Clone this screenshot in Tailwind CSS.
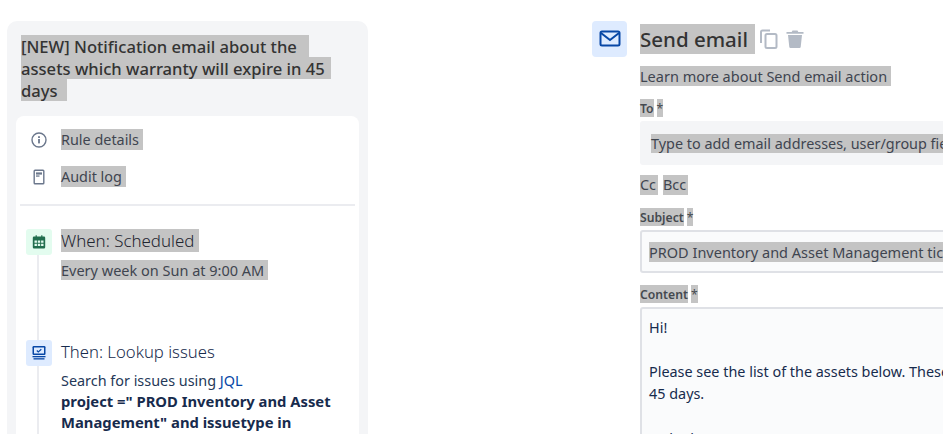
<!DOCTYPE html>
<html lang="en">
  <head>
    <meta charset="UTF-8" />
    <title>Send email rule</title>
    <script src="https://cdn.jsdelivr.net/npm/@tailwindcss/browser@4"></script>
  </head>
  <body class="h-[434px] w-[943px] overflow-hidden bg-white font-['Noto_Sans',sans-serif] text-[#172b4d]">
    <div class="flex items-start">
      <!-- Rule sidebar -->
      <aside class="ml-[7px] mt-[21px] h-[440px] w-[361px] shrink-0 rounded-t-[10px] bg-[#f4f5f7] px-[9px] pt-[14px]">
        <h1 class="px-[5px] text-[16.6px] font-medium leading-[24px] text-[#333]">
          <span class="block h-[22px] w-[288px] whitespace-nowrap bg-[#c4c4c4]">[NEW] Notification email about the</span>
          <span class="block h-[22px] w-[310px] whitespace-nowrap bg-[#c4c4c4]">assets which warranty will expire in 45</span>
          <span class="block h-[22px] w-[46px] whitespace-nowrap bg-[#c4c4c4]">days</span>
        </h1>
        <div class="mt-[15px] h-[400px] rounded-t-[8px] bg-white px-[4px]">
          <ul class="pl-[11px] pt-[13px]">
            <li class="flex h-[21px] items-center gap-[14px]">
              <svg class="h-[16px] w-[16px] shrink-0" viewBox="0 0 16 16" fill="none">
                <circle cx="8" cy="8" r="7" stroke="#6b778c" stroke-width="1.4" />
                <rect x="7.100" y="7" width="1.800" height="4.400" fill="#6b778c" />
                <rect x="7.100" y="4.200" width="1.800" height="1.800" fill="#6b778c" />
              </svg>
              <span class="bg-[#c4c4c4] text-[14.4px] leading-[21px] text-[#3f4550]">Rule details&nbsp;</span>
            </li>
            <li class="mt-[16px] flex h-[21px] items-center gap-[14px]">
              <svg class="h-[16px] w-[16px] shrink-0" viewBox="0 0 16 16" fill="none">
                <rect x="3.200" y="1.200" width="9.600" height="13.600" rx="0.800" stroke="#6b778c" stroke-width="1.400" />
                <rect x="5" y="3.400" width="6" height="2.200" fill="#6b778c" />
                <rect x="5" y="6.400" width="3.500" height="1.300" fill="#6b778c" />
              </svg>
              <span class="bg-[#c4c4c4] text-[14.4px] leading-[21px] text-[#3f4550]">Audit log&nbsp;</span>
            </li>
          </ul>
          <div class="mt-[17px] h-[2px] bg-[#ebecf0]"></div>
          <!-- Rule steps -->
          <div class="relative px-[6px] pt-[23px]">
            <div class="absolute left-[17px] top-[30px] h-[300px] w-[2px] bg-[#ebecf0]"></div>
            <section class="relative flex h-[111px] gap-[9px]">
              <div class="flex h-[26px] w-[26px] shrink-0 items-center justify-center rounded-[3px] bg-[#e3fcef]">
                <svg class="h-[16px] w-[16px]" viewBox="0 0 16 16">
                  <path d="M3 2.500h1.600V1.200h1.200v1.300h4.400V1.200h1.200v1.300H13a1.200 1.200 0 0 1 1.200 1.200v9.600a1.200 1.200 0 0 1-1.200 1.200H3a1.200 1.200 0 0 1-1.200-1.200V3.700A1.200 1.200 0 0 1 3 2.500z" fill="#216e4e" />
                  <path d="M3.500 6.500h2.400v2.300H3.500zM6.800 6.500h2.400v2.300H6.800zM10.100 6.500h2.400v2.300h-2.400zM3.500 9.800h2.400v2.300H3.500zM6.800 9.800h2.400v2.300H6.800zM10.100 9.800h2.400v2.300h-2.400z" fill="#e3fcef" />
                </svg>
              </div>
              <div>
                <h2 class="text-[16.9px] font-light leading-[23px] text-[#1f2530]"><span class="bg-[#c4c4c4]">When: Scheduled&nbsp;</span></h2>
                <p class="mt-[8px] text-[14.5px] leading-[21px] text-[#3f4550]"><span class="bg-[#c4c4c4]">Every week on Sun at 9:00 AM&nbsp;</span></p>
              </div>
            </section>
            <section class="relative flex gap-[9px]">
              <div class="flex h-[26px] w-[26px] shrink-0 items-center justify-center rounded-[3px] bg-[#deebff]">
                <svg class="h-[16px] w-[16px]" viewBox="0 0 16 16">
                  <rect x="1.500" y="1" width="13" height="9" rx="1.200" fill="#0747a6" />
                  <rect x="3" y="2.500" width="10" height="6" fill="#deebff" />
                  <path d="M5.800 5.500l1.500 1.400 3-2.600" fill="none" stroke="#0747a6" stroke-width="1.200" />
                  <rect x="1.500" y="11" width="13" height="1.300" fill="#0747a6" />
                  <rect x="2.500" y="13.200" width="11" height="1.300" fill="#0747a6" />
                </svg>
              </div>
              <div>
                <h2 class="text-[16.7px] font-light leading-[23px] text-[#172b4d]">Then: Lookup issues</h2>
                <p class="mt-[7px] text-[14.4px] leading-[21px] text-[#253858]">Search for issues using <span class="text-[#0747a6]">JQL</span></p>
                <p class="w-[285px] text-[14.8px] font-bold leading-[21px] text-[#172b4d]">project =" PROD Inventory and Asset Management" and issuetype in</p>
              </div>
            </section>
          </div>
        </div>
      </aside>

      <!-- Action form -->
      <main class="ml-[224px] mt-[21px] flex w-[400px] shrink-0 gap-[13px]">
        <div class="flex h-[36px] w-[35px] shrink-0 items-center justify-center rounded-[4px] bg-[#deebff]">
          <svg class="h-[22px] w-[22px]" viewBox="0 0 22 22" fill="none" stroke="#0747a6" stroke-width="2">
            <rect x="1.500" y="3.500" width="19" height="14" rx="1.500" />
            <path d="M2 5l9 7 9-7" />
          </svg>
        </div>
        <div class="min-w-0 flex-1 pt-[3px]">
          <div class="flex h-[30px] items-center">
            <h2 class="bg-[#c4c4c4] pr-[7px] text-[20.5px] font-medium leading-[30px] text-[#333]">Send email</h2>
            <svg class="ml-[4px] h-[20px] w-[20px]" viewBox="0 0 20 20" fill="none" stroke="#b3bac5" stroke-width="2">
              <rect x="6.500" y="5" width="11" height="14" rx="1.500" />
              <path d="M11 1.500H3.500a1.500 1.500 0 0 0-1.500 1.500V14" />
            </svg>
            <svg class="ml-[6px] h-[20px] w-[20px]" viewBox="0 0 20 20" fill="#b3bac5">
              <path d="M7.500 1.500h5l.8 1.500h5.200v1.800h-17V3h5.200zM3 6h14l-1.300 12a1.200 1.200 0 0 1-1.200 1h-9a1.200 1.200 0 0 1-1.200-1z" />
            </svg>
          </div>
          <p class="mt-[11px] h-[22px] text-[14.5px] leading-[22px] text-[#3f4550]"><span class="bg-[#c4c4c4]">Learn more about Send email action&nbsp;</span></p>

          <div class="mt-[12px] flex h-[18px] gap-[3px] text-[12.2px] font-semibold leading-[20px] text-[#44494f]">
            <span class="bg-[#c4c4c4]">To</span><span class="bg-[#c4c4c4] font-normal">*</span>
          </div>
          <div class="mt-[4px] h-[44px] w-[400px] overflow-hidden whitespace-nowrap rounded-[3px] bg-[#f4f5f7] px-[11px] py-[10px]">
            <span class="bg-[#c4c4c4] text-[14.4px] leading-[22px] text-[#3f4550]">Type to add email addresses, user/group fields or smart values</span>
          </div>
          <div class="mt-[10px] flex h-[20px] gap-[5px] text-[14.4px] leading-[20px] text-[#3f4550]">
            <span class="bg-[#c4c4c4] pr-[2px]">Cc</span><span class="bg-[#c4c4c4] pr-[2px]">Bcc</span>
          </div>

          <div class="mt-[13px] flex h-[18px] gap-[3px] text-[12.2px] font-semibold leading-[20px] text-[#44494f]">
            <span class="bg-[#c4c4c4]">Subject</span><span class="bg-[#c4c4c4] font-normal">*</span>
          </div>
          <div class="mt-[4px] h-[43px] w-[400px] overflow-hidden whitespace-nowrap rounded-[3px] border-2 border-[#dfe1e6] bg-[#fafbfc] px-[7px] py-[8px]">
            <span class="bg-[#c4c4c4] text-[14.5px] leading-[21px] text-[#3f4550]">PROD Inventory and Asset Management ticket list</span>
          </div>

          <div class="mt-[12px] flex h-[18px] gap-[3px] text-[12.2px] font-semibold leading-[20px] text-[#44494f]">
            <span class="bg-[#c4c4c4]">Content</span><span class="bg-[#c4c4c4] font-normal">*</span>
          </div>
          <div class="mt-[4px] h-[200px] w-[400px] overflow-hidden whitespace-nowrap rounded-[3px] border-2 border-[#dfe1e6] bg-[#fafbfc] px-[7px] py-[8px] text-[14.4px] leading-[22px] text-[#172b4d]">
            <p>Hi!</p>
            <p class="mt-[22px]">Please see the list of the assets below. These assets' warranty will expire in<br />45 days.</p>
            <p class="mt-[23px]">{{#lookupIssues}} {{Key}}</p>
          </div>
        </div>
      </main>
    </div>
  </body>
</html>
